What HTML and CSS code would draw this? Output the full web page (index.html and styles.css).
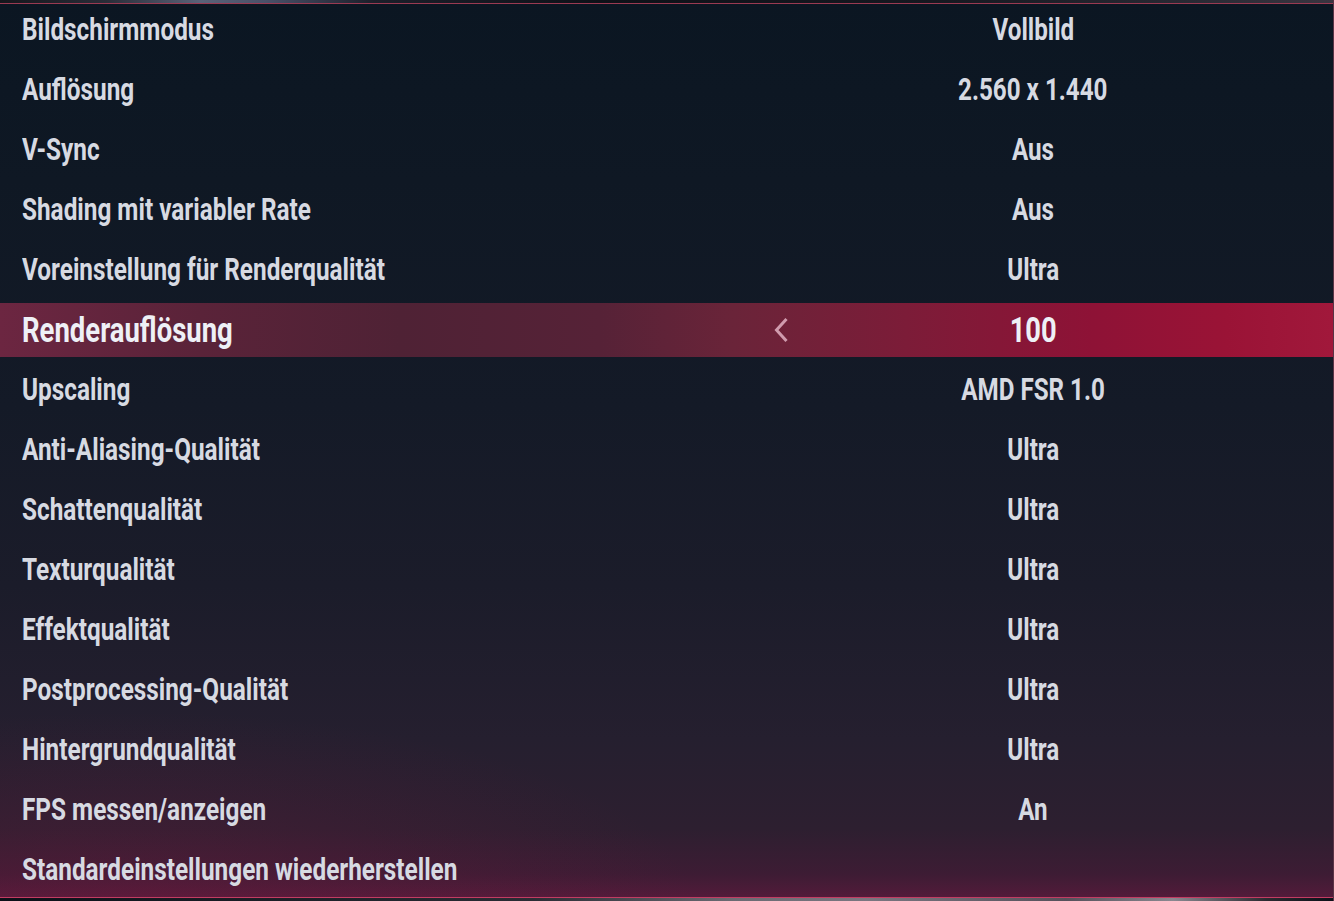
FILE: index.html
```html
<!DOCTYPE html>
<html lang="de">
<head>
    <meta charset="UTF-8">
    <meta name="viewport" content="width=device-width, initial-scale=1.0">
    <title>Grafikeinstellungen</title>
    <link rel="stylesheet" href="styles.css">
</head>
<body>

    <div class="panel">
        <div class="edge edge-top"></div>

        <ul class="settings">
            <li class="row"><span class="label">Bildschirmmodus</span><span class="arrow"></span><span class="value"><span class="text">Vollbild</span></span><span class="arrow"></span></li>
            <li class="row"><span class="label">Auflösung</span><span class="arrow"></span><span class="value"><span class="text">2.560 x 1.440</span></span><span class="arrow"></span></li>
            <li class="row"><span class="label">V-Sync</span><span class="arrow"></span><span class="value"><span class="text">Aus</span></span><span class="arrow"></span></li>
            <li class="row"><span class="label">Shading mit variabler Rate</span><span class="arrow"></span><span class="value"><span class="text">Aus</span></span><span class="arrow"></span></li>
            <li class="row"><span class="label">Voreinstellung für Renderqualität</span><span class="arrow"></span><span class="value"><span class="text">Ultra</span></span><span class="arrow"></span></li>
            <li class="row active">
                <span class="label">Renderauflösung</span>
                <span class="arrow">
                    <svg width="18" height="26" viewBox="0 0 18 26"><path d="M14.5 2 L4.5 13 L14.5 24" fill="none" stroke="currentColor" stroke-width="3"/></svg>
                </span>
                <span class="value"><span class="text">100</span></span>
                <span class="arrow"></span>
            </li>
            <li class="row"><span class="label">Upscaling</span><span class="arrow"></span><span class="value"><span class="text">AMD FSR 1.0</span></span><span class="arrow"></span></li>
            <li class="row"><span class="label">Anti-Aliasing-Qualität</span><span class="arrow"></span><span class="value"><span class="text">Ultra</span></span><span class="arrow"></span></li>
            <li class="row"><span class="label">Schattenqualität</span><span class="arrow"></span><span class="value"><span class="text">Ultra</span></span><span class="arrow"></span></li>
            <li class="row"><span class="label">Texturqualität</span><span class="arrow"></span><span class="value"><span class="text">Ultra</span></span><span class="arrow"></span></li>
            <li class="row"><span class="label">Effektqualität</span><span class="arrow"></span><span class="value"><span class="text">Ultra</span></span><span class="arrow"></span></li>
            <li class="row"><span class="label">Postprocessing-Qualität</span><span class="arrow"></span><span class="value"><span class="text">Ultra</span></span><span class="arrow"></span></li>
            <li class="row"><span class="label">Hintergrundqualität</span><span class="arrow"></span><span class="value"><span class="text">Ultra</span></span><span class="arrow"></span></li>
            <li class="row"><span class="label">FPS messen/anzeigen</span><span class="arrow"></span><span class="value"><span class="text">An</span></span><span class="arrow"></span></li>
            <li class="row"><span class="label">Standardeinstellungen wiederherstellen</span></li>
        </ul>

        <div class="edge edge-bottom"></div>
    </div>

</body>
</html>
```

FILE: styles.css
```css
html, body {
    margin: 0;
    padding: 0;
    height: 100%;
    background: #0b1521;
}
body {
    font-family: Roboto, "Liberation Sans", sans-serif;
    color: #d7dae2;
    overflow: hidden;
}
.panel {
    position: relative;
    height: 901px;
    background:
        radial-gradient(ellipse 60% 30% at 10% 100%, rgba(110, 25, 60, 0.35), rgba(110, 25, 60, 0) 70%),
        linear-gradient(180deg, #0b1622 0%, #0f1824 20%, #141a27 45%, #1b1c2a 65%, #251f2f 82%, #2d1f30 92%, #3d1c34 97%, #521b3a 99.5%);
    border-right: 1px solid #5a3446;
    box-sizing: border-box;
}
.settings {
    list-style: none;
    margin: 0;
    padding: 0;
}
.row {
    display: grid;
    grid-template-columns: 1fr 96px 408px 96px;
    align-items: center;
    height: 60px;
    box-sizing: border-box;
    padding-bottom: 1px;
    font-size: 31px;
    font-weight: bold;
    white-space: nowrap;
}
.label {
    display: block;
    padding-left: 22px;
    transform: scaleX(0.785);
    transform-origin: 22px 50%;
}
.value {
    text-align: center;
}
.value .text {
    display: inline-block;
    transform: scaleX(0.78);
    transform-origin: 50% 50%;
}
.arrow {
    display: flex;
    justify-content: center;
    align-items: center;
    color: rgba(232, 186, 202, 0.8);
}
.row.active {
    padding: 3px 0;
    background-clip: content-box;
    background-image: linear-gradient(90deg, #6c2641 0%, #5a2339 15%, #4f2235 30%, #562237 45%, #6a2439 55%, #7c1c38 68%, #8e1236 82%, #9a1336 92%, #a1183b 100%);
    color: #eef0f6;
    font-size: 35px;
}
.edge {
    position: absolute;
    left: 0;
    right: 0;
    height: 4px;
}
.edge-top {
    top: 0;
    height: 3px;
    background: linear-gradient(90deg, #15161c 0%, #2a2d38 8%, #5a6278 15%, #4a5068 20%, #1c1f2a 28%, #0e1118 45%, #161820 70%, #2a2a34 90%, #3a3540 100%);
    border-bottom: 1px solid #9a3a52;
}
.edge-bottom {
    bottom: 0;
    height: 3px;
    background: linear-gradient(90deg, #0b1018 0%, #2a2c34 40%, #6a6a72 55%, #7a7680 65%, #55505a 80%, #8a8890 88%, #2a2a30 95%, #0b1018 100%);
    border-top: 1px solid #c23c62;
}
```
